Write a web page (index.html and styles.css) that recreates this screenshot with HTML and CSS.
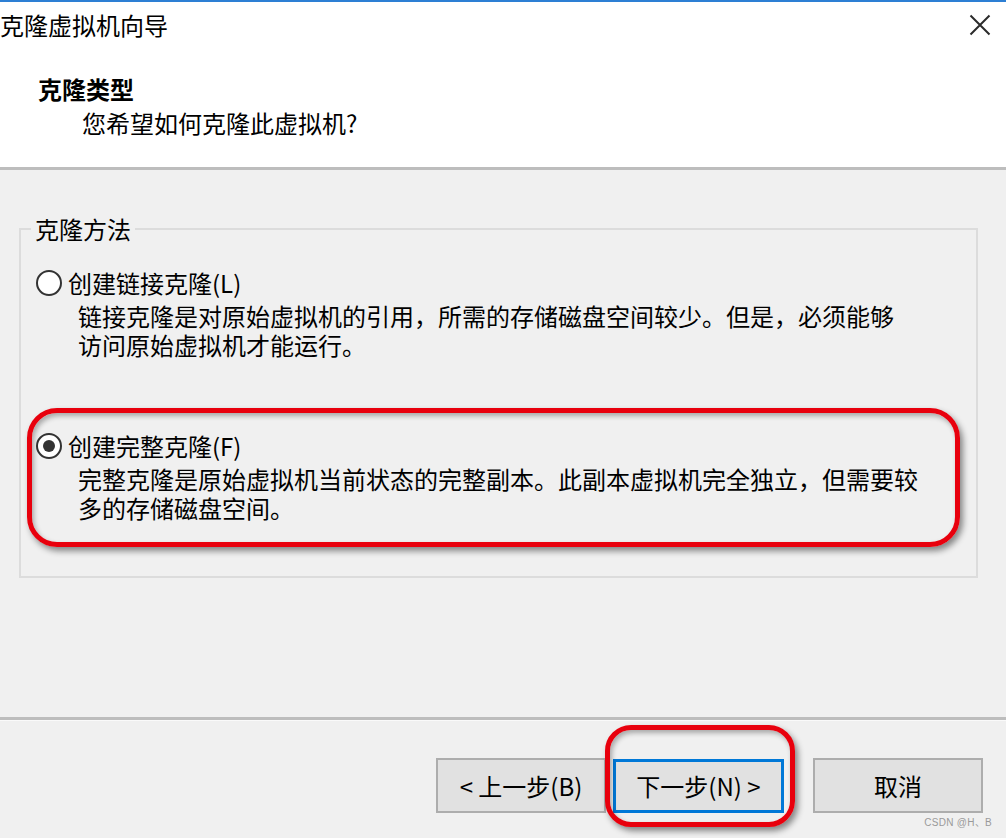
FILE: index.html
```html
<!DOCTYPE html>
<html lang="zh-CN">
<head>
<meta charset="utf-8">
<title>克隆虚拟机向导</title>
<link rel="stylesheet" href="styles.css">
</head>
<body>
<div class="window">
  <header class="header">
    <div class="titlebar">
      <span class="title">克隆虚拟机向导</span>
      <span class="close" aria-label="关闭">
        <svg width="22" height="22" viewBox="0 0 22 22"><path d="M1.5 1.5 L20.5 20.5 M20.5 1.5 L1.5 20.5" stroke="#2b2b2b" stroke-width="2" fill="none"/></svg>
      </span>
    </div>
    <div class="heading">克隆类型</div>
    <div class="subtitle">您希望如何克隆此虚拟机?</div>
  </header>

  <main class="content">
    <fieldset class="group">
      <legend class="legend">克隆方法</legend>
      <div class="option option-first">
        <div class="option-label"><span class="radio"></span><span>创建链接克隆(L)</span></div>
        <div class="desc">链接克隆是对原始虚拟机的引用，所需的存储磁盘空间较少。但是，必须能够<br>访问原始虚拟机才能运行。</div>
      </div>
      <div class="option option-second">
        <div class="option-label"><span class="radio checked"></span><span>创建完整克隆(F)</span></div>
        <div class="desc">完整克隆是原始虚拟机当前状态的完整副本。此副本虚拟机完全独立，但需要较<br>多的存储磁盘空间。</div>
      </div>
    </fieldset>
  </main>

  <footer class="footer">
    <button class="btn btn-back">&lt; 上一步(B)</button>
    <button class="btn btn-next">下一步(N) &gt;</button>
    <button class="btn btn-cancel">取消</button>
  </footer>

  <div class="annot annot-option"></div>
  <div class="annot annot-next"></div>
  <div class="watermark">CSDN @H、B</div>
</div>
</body>
</html>
```

FILE: styles.css
```css
* { box-sizing: border-box; }

html, body {
  margin: 0;
  padding: 0;
  background: #f0f0f0;
}

body {
  font-family: "Noto Sans CJK SC", "Microsoft YaHei", sans-serif;
  font-size: 24px;
  line-height: 30px;
  color: #000;
}

.window {
  position: relative;
  width: 1006px;
  height: 838px;
  display: flex;
  flex-direction: column;
  overflow: hidden;
}

/* header */
.header {
  background: #fff;
  border-top: 2px solid #2d7fd4;
  border-bottom: 3px solid #bdbdbd;
  height: 170px;
  padding-top: 8px;
  flex: none;
}

.titlebar {
  display: flex;
  justify-content: space-between;
  align-items: center;
  height: 30px;
  padding-right: 15px;
}

.close {
  display: flex;
  width: 22px;
  height: 22px;
}

.heading {
  margin-top: 34px;
  padding-left: 38px;
  font-weight: 700;
}

.subtitle {
  margin-top: 4px;
  padding-left: 82px;
}

/* content */
.content {
  flex: 1;
  padding-top: 44px;
}

.group {
  margin: 0 28px 0 19px;
  padding: 0 0 54px 10px;
  border: 2px solid #dcdcdc;
  min-width: 0;
}

.legend {
  padding: 0 4px;
  line-height: 30px;
}

.option-first { margin-top: 24px; margin-left: 5px; }
.option-second { margin-top: 72px; margin-left: 5px; }

.option-label {
  display: flex;
  align-items: center;
  gap: 6px;
  line-height: 29px;
}

.radio {
  width: 26px;
  height: 26px;
  border: 2px solid #333;
  border-radius: 50%;
  background: #fff;
  flex: none;
  display: flex;
  align-items: center;
  justify-content: center;
}

.radio.checked::after {
  content: "";
  width: 12px;
  height: 12px;
  border-radius: 50%;
  background: #333;
}

.desc {
  margin-top: 4px;
  margin-left: 42px;
  line-height: 29px;
  white-space: nowrap;
}

/* footer */
.footer {
  flex: none;
  height: 121px;
  border-top: 3px solid #bdbdbd;
  box-shadow: inset 0 1px 0 #fafafa;
  display: flex;
  align-items: flex-start;
  padding: 38px 23px 0 0;
  justify-content: flex-end;
}

.btn {
  font-family: inherit;
  font-size: 24px;
  line-height: 30px;
  color: #000;
  height: 55px;
  background: #e1e1e1;
  border: 2px solid #adadad;
  padding: 0;
  margin: 0;
}

.btn-back { width: 170px; }
.btn-next {
  width: 171px;
  margin-left: 7px;
  border: 3px solid #0078d7;
  height: 54px;
  margin-top: 1px;
}
.btn-cancel { width: 170px; margin-left: 29px; }

/* red annotations drawn over the dialog */
.annot {
  position: absolute;
  border: 5px solid #e8000d;
  box-shadow: 3px 4px 6px rgba(0, 0, 0, 0.45), inset 2px 3px 5px rgba(0, 0, 0, 0.3);
}

.annot-option {
  left: 27px;
  top: 408px;
  width: 933px;
  height: 139px;
  border-radius: 30px;
}

.annot-next {
  left: 605px;
  top: 725px;
  width: 190px;
  height: 102px;
  border-radius: 26px;
}

.watermark {
  position: absolute;
  right: 14px;
  bottom: 9px;
  font-family: "Liberation Sans", sans-serif;
  font-size: 10px;
  line-height: 12px;
  color: #9a9a9a;
  letter-spacing: 0.3px;
}
```
